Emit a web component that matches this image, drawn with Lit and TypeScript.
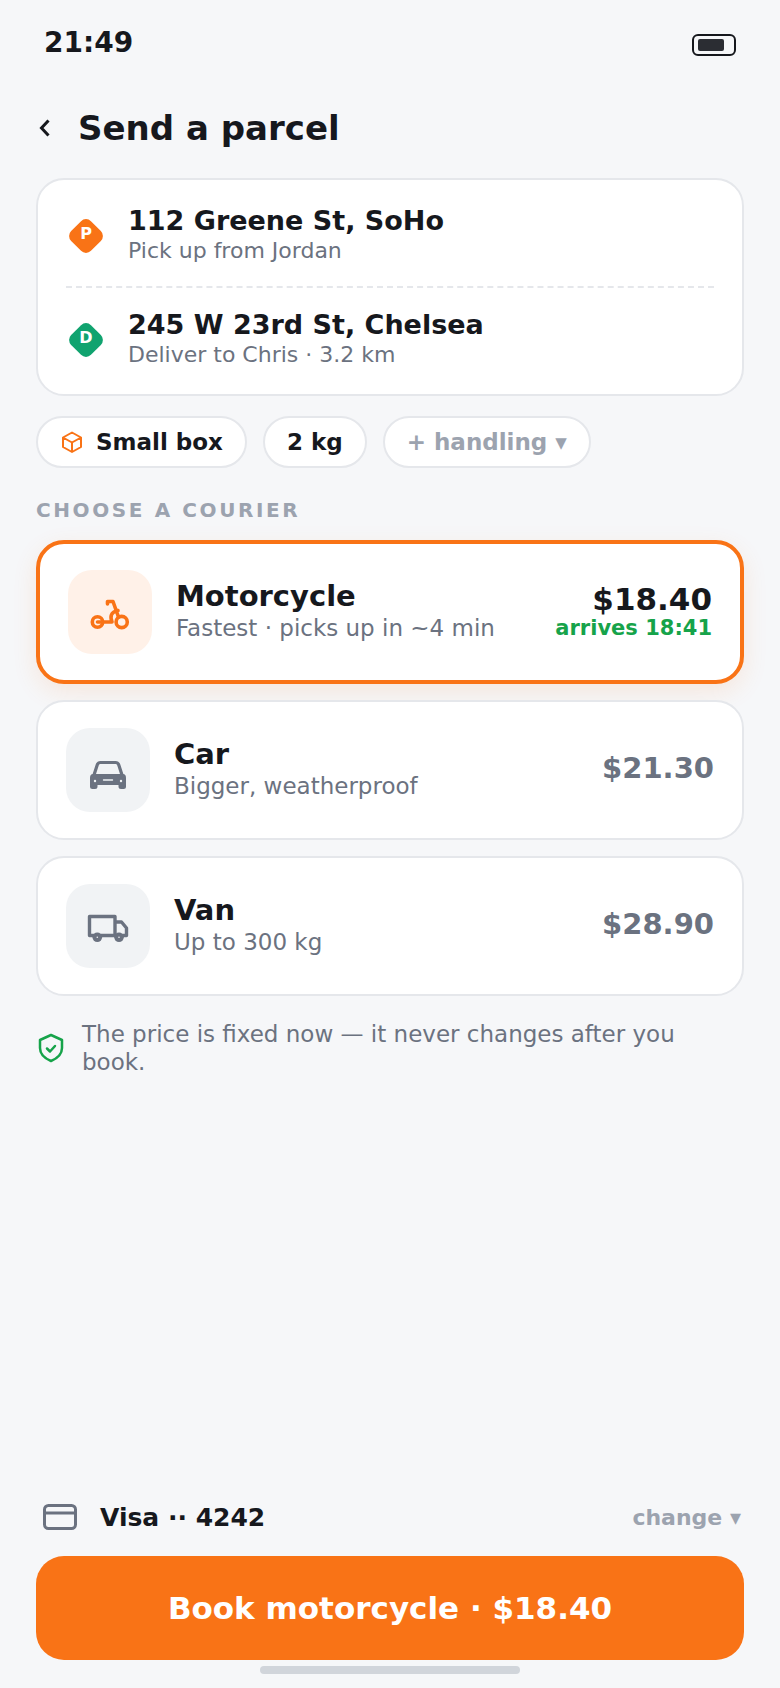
import { LitElement, html, css } from "lit";
import { customElement } from "lit/decorators.js";

const ICONS = {
  bike: html`<svg width="44" height="44" viewBox="0 0 44 44" fill="none" stroke="#f97316" stroke-width="3.600" stroke-linecap="round" stroke-linejoin="round"><circle cx="33.700" cy="32" r="5.600"/><circle cx="9.500" cy="32" r="5.200"/><path d="M9.500 32H24C22 27 22.500 22 30 20.500M19.500 11.500H25L30.500 27M19.500 11.500V14"/></svg>`,
  car: html`<svg width="44" height="44" viewBox="0 0 44 44" fill="none" stroke="#6b7280" stroke-width="3.200" stroke-linecap="round" stroke-linejoin="round"><path d="M8 27l3.200-10c.6-1.700 1.800-2.500 3.300-2.500h15c1.500 0 2.700.8 3.300 2.500L36 27"/><path d="M7 26H37Q40 26 40 30V38.500Q40 41 37.500 41H35Q32.500 41 32.500 38.500V37H11.500V38.500Q11.500 41 9 41H6.500Q4 41 4 38.500V30Q4 26 7 26Z" fill="#6b7280" stroke="none"/><path d="M17.500 32h9" stroke="#f1f3f5" stroke-width="1.400"/><circle cx="9" cy="33" r="1.200" fill="#f1f3f5" stroke="none"/><circle cx="35" cy="33" r="1.200" fill="#f1f3f5" stroke="none"/></svg>`,
  van: html`<svg width="44" height="44" viewBox="0 0 44 44" fill="none" stroke="#6b7280" stroke-width="3.400" stroke-linejoin="round"><path d="M29 31.500V12.500H3.500V31.500H40.500V24L35.500 18H29"/><circle cx="11.300" cy="33.300" r="4.800" fill="#6b7280" stroke="none"/><circle cx="33" cy="33.300" r="4.800" fill="#6b7280" stroke="none"/><circle cx="11.300" cy="33.300" r=".8" fill="#f1f3f5" stroke="none"/><circle cx="33" cy="33.300" r=".8" fill="#f1f3f5" stroke="none"/></svg>`,
};

@customElement("app-root")
export class AppRoot extends LitElement {
  static styles = css`
    :host { display: flex; flex-direction: column; height: 1688px; box-sizing: border-box; background: #f6f7f9; color: #16181d; font-family: "DejaVu Sans", sans-serif; padding: 0 36px; }
    * { box-sizing: border-box; }
    .status { display: flex; justify-content: space-between; align-items: center; height: 30px; margin-top: 28px; padding: 0 8px; font-size: 28px; font-weight: 700; line-height: 30px; }
    .battery { width: 44px; height: 22px; margin-top: 4px; border: 2px solid #16181d; border-radius: 6px; padding: 3px 4px; }
    .battery div { width: 26px; height: 100%; background: #2b2d33; border-radius: 2px; }
    .head { display: flex; align-items: center; gap: 26px; height: 44px; margin-top: 48px; padding-left: 2px; font-size: 34px; font-weight: 700; }
    .card { background: #fff; border: 2px solid #e5e7eb; border-radius: 28px; }
    .route { margin-top: 28px; padding: 0 28px; height: 218px; }
    .stop { display: flex; align-items: center; gap: 25px; height: 106px; padding: 6px 0 0 3px; }
    .stop + .stop { border-top: 2px dashed #e5e7eb; height: 108px; padding: 0 0 2px 3px; }
    .stop .txt { padding-bottom: 4px; }
    .dia { width: 34px; height: 34px; flex: none; position: relative; display: flex; align-items: center; justify-content: center; color: #fff; font-size: 16px; font-weight: 700; padding-bottom: 6px; }
    .dia::before { content: ""; position: absolute; left: 3px; top: 3px; width: 28px; height: 28px; border-radius: 7px; background: var(--c); transform: rotate(45deg); }
    .dia span { position: relative; }
    .t { font-size: 27px; font-weight: 700; line-height: 33px; }
    .s { font-size: 22px; color: #6b7280; line-height: 27px; }
    .chips { display: flex; gap: 16px; margin-top: 20px; }
    .chip { display: flex; align-items: center; gap: 12px; height: 52px; padding: 0 22px; background: #fff; border: 2px solid #e5e7eb; border-radius: 26px; font-size: 23px; font-weight: 700; }
    .chip.m { color: #9ca3af; }
    .label { margin-top: 28px; font-size: 20px; font-weight: 700; letter-spacing: 2.6px; color: #9ca3af; line-height: 28px; }
    .list { display: flex; flex-direction: column; gap: 16px; margin-top: 16px; }
    .courier { display: flex; align-items: center; gap: 24px; height: 140px; padding: 0 28px; }
    .courier.sel { height: 144px; border: 4px solid #f97316; box-shadow: 0 8px 24px rgba(249,115,22,0.12); }
    .ico { width: 84px; height: 84px; border-radius: 24px; background: #f1f3f5; display: flex; align-items: center; justify-content: center; flex: none; }
    .sel .ico { background: #fff1e8; }
    .body { flex: 1; padding-bottom: 2px; }
    .body .t { font-size: 29px; line-height: 34px; }
    .body .s { font-size: 23px; line-height: 30px; }
    .pr { text-align: right; font-size: 29px; font-weight: 700; color: #6b7280; line-height: 34px; padding-bottom: 4px; }
    .sel .pr { color: #16181d; font-size: 31px; padding-bottom: 0; line-height: 32px; }
    .arr { font-size: 21px; line-height: 26px; color: #16a34a; font-weight: 700; }
    .note { display: flex; align-items: center; gap: 18px; margin-top: 24px; padding: 0 40px 0 2px; font-size: 23px; line-height: 28px; color: #6b7280; }
    .spacer { flex: 1; }
    .pay { display: flex; align-items: center; justify-content: space-between; height: 40px; padding: 2px 3px 0 7px; font-size: 25px; font-weight: 700; }
    .pay .l { display: flex; align-items: center; gap: 23px; }
    .pay .c { color: #9ca3af; font-size: 22px; }
    .btn { margin-top: 20px; height: 104px; border-radius: 28px; background: #f97316; color: #fff; font-size: 31px; font-weight: 700; display: flex; align-items: center; justify-content: center; }
    .home { width: 260px; height: 8px; border-radius: 4px; background: #d1d5db; margin: 6px auto 14px; }
    .shield { flex: none; }
  `;

  render() {
    const courier = (ic: unknown, t: string, s: string, p: string, sel = false, arr = "") => html`
      <div class="card courier ${sel ? "sel" : ""}">
        <div class="ico">${ic}</div>
        <div class="body"><div class="t">${t}</div><div class="s">${s}</div></div>
        <div class="pr">${p}${arr ? html`<div class="arr">${arr}</div>` : ""}</div>
      </div>`;
    return html`
      <div class="status"><span>21:49</span><div class="battery"><div></div></div></div>
      <div class="head">
        <svg width="14" height="20" viewBox="0 0 14 20" fill="none" stroke="#16181d" stroke-width="3"><path d="M10.500 2.500L3.500 10l7 7.500"/></svg>
        <span>Send a parcel</span>
      </div>
      <div class="card route">
        <div class="stop"><div class="dia" style="--c:#f97316"><span>P</span></div><div class="txt"><div class="t">112 Greene St, SoHo</div><div class="s">Pick up from Jordan</div></div></div>
        <div class="stop"><div class="dia" style="--c:#10a36f"><span>D</span></div><div class="txt"><div class="t">245 W 23rd St, Chelsea</div><div class="s">Deliver to Chris · 3.2 km</div></div></div>
      </div>
      <div class="chips">
        <div class="chip"><svg width="24" height="24" viewBox="0 0 24 24" fill="none" stroke="#f97316" stroke-width="2" stroke-linejoin="round"><path d="M12 2.500l9 5v9.500l-9 5-9-5V7.500zM3 7.500l9 5 9-5M12 12.500V22"/></svg>Small box</div>
        <div class="chip">2 kg</div>
        <div class="chip m">+ handling ▾</div>
      </div>
      <div class="label">CHOOSE A COURIER</div>
      <div class="list">
        ${courier(ICONS.bike, "Motorcycle", "Fastest · picks up in ~4 min", "$18.40", true, "arrives 18:41")}
        ${courier(ICONS.car, "Car", "Bigger, weatherproof", "$21.30")}
        ${courier(ICONS.van, "Van", "Up to 300 kg", "$28.90")}
      </div>
      <div class="note">
        <svg class="shield" width="26" height="30" viewBox="0 0 26 30" fill="none" stroke="#16a34a" stroke-width="2.500" stroke-linecap="round" stroke-linejoin="round"><path d="M13 2L24 7V15C24 21 19 25.500 13 28C7 25.500 2 21 2 15V7Z"/><path d="M9 15.500l3 3 5-5.500"/></svg>
        <span>The price is fixed now — it never changes after you book.</span>
      </div>
      <div class="spacer"></div>
      <div class="pay">
        <div class="l"><svg width="34" height="26" viewBox="0 0 34 26" fill="none" stroke="#6b7280" stroke-width="3"><rect x="1.500" y="1.500" width="31" height="23" rx="4"/><path d="M1.500 9h31"/></svg><span>Visa ·· 4242</span></div>
        <span class="c">change ▾</span>
      </div>
      <div class="btn">Book motorcycle · $18.40</div>
      <div class="home"></div>
    `;
  }
}
